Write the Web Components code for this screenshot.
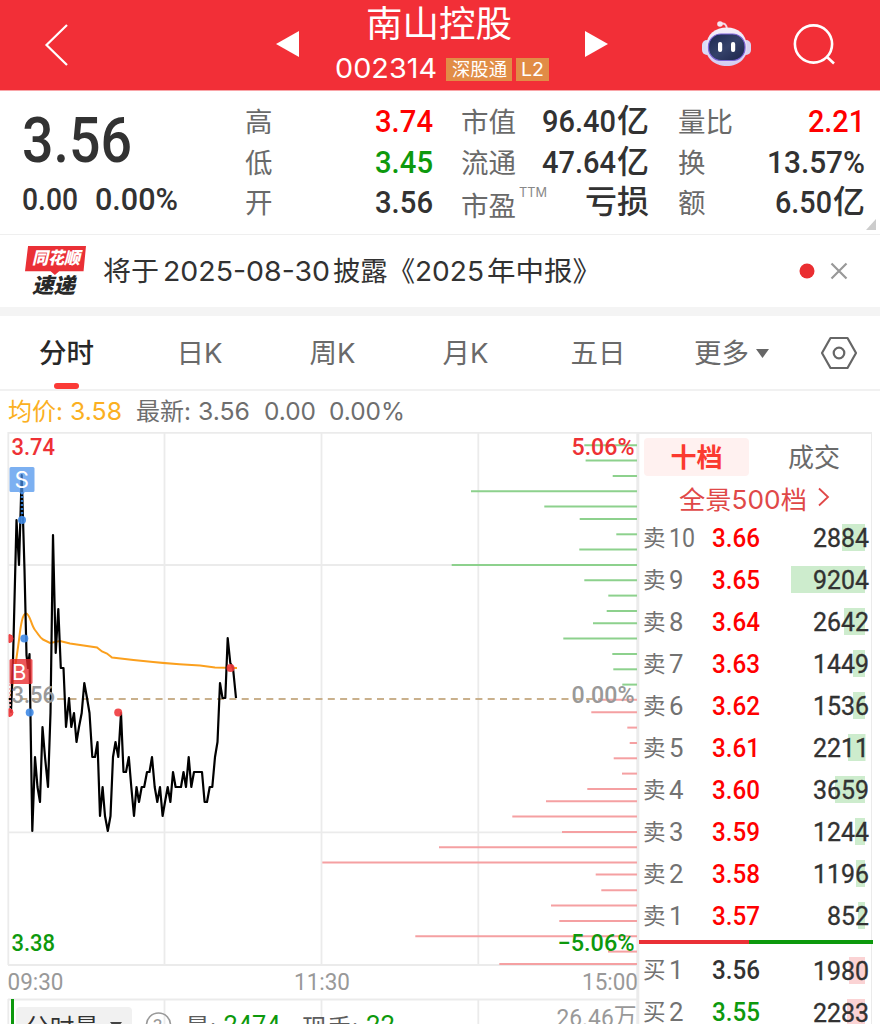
<!DOCTYPE html>
<html lang="zh-CN">
<head>
<meta charset="utf-8">
<title>南山控股 002314</title>
<style>
  html, body { margin: 0; padding: 0; }
  body {
    width: 880px;
    height: 1024px;
    overflow: hidden;
    background: #fff;
    color: #323232;
    font-family: Inter, "Noto Sans CJK SC", sans-serif;
  }
</style>
</head>
<body>
<stock-page></stock-page>

<script>
(function () {
  const NUM = 'Roboto, "Noto Sans CJK SC", sans-serif';

  // 基类：把 html 写入 shadow root
  class Base extends HTMLElement {
    connectedCallback() {
      if (this.shadowRoot) return;
      this.attachShadow({ mode: "open" });
      this.shadowRoot.innerHTML = this.template();
    }
    attr(name, def) {
      return this.getAttribute(name) || def || "";
    }
  }

  /** 顶部标题栏 */
  class StockHeader extends Base {
    template() {
      return `
        <style>
          :host {
            display: grid;
            grid-template-columns: 268px 348px 1fr;
            height: 90px;
            background: #f22f37;
            border-bottom: 1px solid #f9a5a8;
            color: #fff;
          }
          svg { display: block; }
          .back { padding: 22px 0 0 43px; }
          .mid { display: flex; justify-content: space-between; }
          .mid > svg { margin-top: 30px; }
          .info { display: flex; flex-direction: column; align-items: center; }
          .name { font-size: 36px; line-height: 36px; margin: 6px 6px 0 0; white-space: nowrap; }
          .code { display: flex; align-items: center; margin-top: 13px; height: 28px; font-size: 27px; line-height: 28px; }
          .tag {
            display: flex;
            justify-content: center;
            box-sizing: border-box;
            height: 23px;
            margin-left: 4px;
            background: #e18c46;
            font-size: 18px;
            line-height: 23px;
          }
          .right { display: flex; padding: 18px 0 0 84px; gap: 38px; }
        </style>
        <div class="back">
          <svg width="28" height="46" fill="none" stroke="#fff" stroke-width="2.2"><path d="M24 3L3.5 23L24 43"/></svg>
        </div>
        <div class="mid">
          <svg width="32" height="28" fill="#fff"><path d="M8 14L31 1V27Z"/></svg>
          <div class="info">
            <div class="name"><fit-text w="146">南山控股</fit-text></div>
            <div class="code">
              <fit-text w="102">002314</fit-text>
              <span class="tag" style="width:66px;margin-left:9px"><fit-text w="55">深股通</fit-text></span>
              <span class="tag" style="width:33px"><fit-text w="23">L2</fit-text></span>
            </div>
          </div>
          <svg width="32" height="28" fill="#fff"><path d="M1 1L24 14L1 27Z"/></svg>
        </div>
        <div class="right">
          <svg width="54" height="52" viewBox="0 0 54 52">
            <defs>
              <linearGradient id="shell" x1="0" y1="0" x2="0" y2="1">
                <stop offset="0" stop-color="#f6f1fa"/><stop offset="1" stop-color="#d3cbf2"/>
              </linearGradient>
              <linearGradient id="face" x1="0" y1="0" x2="1" y2="1">
                <stop offset="0" stop-color="#1c2850"/><stop offset=".5" stop-color="#35426a"/><stop offset="1" stop-color="#1b2349"/>
              </linearGradient>
            </defs>
            <path d="M20 6Q27 4 27 12" fill="none" stroke="#f3d5e4" stroke-width="2"/>
            <circle cx="20" cy="6" r="2.8" fill="#f5e6f2"/>
            <rect x="2" y="22" width="10" height="15" rx="5" fill="#d9dcf7"/>
            <rect x="41" y="22" width="10" height="15" rx="5" fill="#d9d4f2"/>
            <path d="M27 9.500C38 9.500 46 16 47 28C48 40 39 48 27 48C14 48 5 40 6 28C7 16 15 9.500 27 9.500Z" fill="url(#shell)"/>
            <rect x="8.500" y="16" width="36.500" height="26.500" rx="12.500" fill="url(#face)" stroke="#7c62d6" stroke-width="1.200"/>
            <rect x="18" y="24" width="4.200" height="10" rx="2" fill="#fff"/>
            <rect x="31" y="24" width="4.200" height="10" rx="2" fill="#fff"/>
          </svg>
          <svg width="46" height="52" fill="none" stroke="#fff" stroke-width="2.600">
            <circle cx="21.500" cy="26" r="18.600"/><path d="M34.500 38.500L42 45.500"/>
          </svg>
        </div>`;
    }
  }

  /** 单个指标：左标签，右数值 */
  class StatCell extends Base {
    template() {
      const unit = this.attr("unit");
      return `
        <style>
          :host { display: flex; justify-content: space-between; align-items: center; height: 40.5px; white-space: nowrap; }
          .label { font-size: 27.5px; line-height: 42px; color: #6a6a6a; display: flex; }
          .value { display: flex; align-items: center; font: 500 32px/40px ${NUM}; color: ${this.attr("color", "#323232")}; }
          .value fit-text { line-height: 38px; margin-bottom: 2px; }
          .unit { font-size: 32px; margin: 0 0 2px 1px; }
          sup { font: 13px/14px Inter; color: #888; margin: 0 0 0 3px; }
          :host([sup]) .label { padding-top: 6px; }
        </style>
        <span class="label">${this.attr("label")}${this.hasAttribute("sup") ? `<sup><fit-text w="28">${this.attr("sup")}</fit-text></sup>` : ""}</span>
        <span class="value">
          ${this.hasAttribute("value") ? `<fit-text w="${this.attr("w")}">${this.attr("value")}</fit-text>` : ""}
          ${unit ? `<span class="unit">${unit}</span>` : ""}
        </span>`;
    }
  }

  /** 行情概要 */
  class QuotePanel extends Base {
    template() {
      return `
        <style>
          :host {
            display: grid;
            grid-template-columns: 223px 188px 188px 220px;
            height: 144px;
            box-sizing: border-box;
            padding-left: 22px;
            border-bottom: 1.5px solid #efefef;
          }
          .price { font: 500 63px/64px ${NUM}; margin-top: 18px; }
          .change { display: flex; gap: 17px; font: 500 32px/36px ${NUM}; margin-top: 8px; }
          .col { padding-top: 11px; }
          .c2, .c3 { margin-left: 28px; width: 188px; }
          .c3 { margin-left: 57px; width: 187px; }
          .c2 { padding-left: 0; }
          .corner {
            position: absolute;
            left: 866px;
            top: 219px;
            width: 10px;
            height: 11px;
            background: #ccc;
            clip-path: polygon(100% 0, 100% 100%, 0 100%);
          }
        </style>
        <div>
          <div class="price"><fit-text w="110">3.56</fit-text></div>
          <div class="change"><fit-text w="56">0.00</fit-text><fit-text w="83">0.00%</fit-text></div>
        </div>
        <div class="col">
          <stat-cell label="高" value="3.74" w="58" color="#f00"></stat-cell>
          <stat-cell label="低" value="3.45" w="58" color="#0d990d"></stat-cell>
          <stat-cell label="开" value="3.56" w="58"></stat-cell>
        </div>
        <div class="col c2">
          <stat-cell label="市值" value="96.40" w="74" unit="亿"></stat-cell>
          <stat-cell label="流通" value="47.64" w="74" unit="亿"></stat-cell>
          <stat-cell label="市盈" sup="TTM" unit="亏损"></stat-cell>
        </div>
        <div class="col c3">
          <stat-cell label="量比" value="2.21" w="57" color="#f00"></stat-cell>
          <stat-cell label="换" value="13.57%" w="98"></stat-cell>
          <stat-cell label="额" value="6.50" w="57" unit="亿"></stat-cell>
        </div>
        <i class="corner"></i>`;
    }
  }

  /** 公告条 */
  class NoticeBar extends Base {
    template() {
      return `
        <style>
          :host { display: flex; align-items: center; height: 72px; border-bottom: 9px solid #f4f4f4; padding-left: 25px; }
          .logo { display: flex; flex-direction: column; align-items: center; width: 61px; height: 50px; font-style: italic; font-weight: 900; }
          .badge {
            display: flex;
            justify-content: center;
            width: 61px;
            height: 29px;
            background: #ea3036;
            clip-path: polygon(5% 0, 100% 0, 96% 87%, 56% 87%, 49% 100%, 42% 87%, 0 87%);
            color: #fff;
            font-size: 17px;
            line-height: 25px;
          }
          .sub { color: #282828; font-size: 21px; line-height: 21px; margin: 0 4px 0 0; }
          .text { display: flex; align-items: center; margin-left: 17px; font-size: 27.5px; line-height: 40px; width: 696px; }
          svg { display: block; }
        </style>
        <div class="logo">
          <div class="badge"><fit-text w="48">同花顺</fit-text></div>
          <div class="sub"><fit-text w="43">速递</fit-text></div>
        </div>
        <div class="text">
          <fit-text w="56">将于</fit-text><fit-text w="167" style="margin-left:4px">2025-08-30</fit-text>
          <fit-text w="82" style="margin-left:3px">披露《</fit-text><fit-text w="69">2025</fit-text>
          <fit-text w="114" style="margin-left:3px">年中报》</fit-text>
        </div>
        <svg width="54" height="20">
          <circle cx="8" cy="10" r="7.500" fill="#ea2e31"/>
          <path d="M32.500 2.500L47.500 17.500M47.500 2.500L32.500 17.500" stroke="#999" stroke-width="2.200"/>
        </svg>`;
    }
  }

  /** 周期切换 */
  class PeriodTabs extends Base {
    template() {
      return `
        <style>
          :host {
            display: grid;
            grid-template-columns: 133px 133px 133px 133px 132px 216px;
            height: 73px;
            border-bottom: 2px solid #f1f1f1;
            font-size: 27.5px;
            color: #6a6a6a;
          }
          div { display: flex; flex-direction: column; align-items: center; line-height: 40px; padding-top: 17px; white-space: nowrap; }
          .on { font-weight: 500; color: #282828; }
          .on::after { content: ""; width: 25px; height: 6px; border-radius: 3px; background: #fb3a36; margin-top: 10px; }
          .more { flex-direction: row; align-items: flex-start; padding-left: 30px; }
          .tri { margin: 15px 0 0 7px; }
          .hex { margin: 3px 0 0 51px; }
        </style>
        <div class="on">分时</div>
        <div>日K</div>
        <div>周K</div>
        <div>月K</div>
        <div>五日</div>
        <div class="more">更多
          <svg class="tri" width="13" height="11"><path d="M0 1H13L6.500 10Z" fill="#666"/></svg>
          <svg class="hex" width="38" height="34" fill="none" stroke="#666" stroke-width="2.200">
            <path d="M10.500 2H27.500L36 17L27.500 32H10.500L2 17Z" stroke-linejoin="round"/>
            <circle cx="19" cy="17" r="5.300"/>
          </svg>
        </div>`;
    }
  }

  /** 均价 / 最新 */
  class PriceLine extends Base {
    template() {
      return `
        <style>
          :host { display: flex; height: 41px; font-size: 24px; line-height: 41px; color: #6e6e6e; padding-left: 8px; white-space: nowrap; }
          .avg { display: flex; color: #fbb022; margin-right: 12px; }
          fit-text { margin-right: 7px; }
        </style>
        <span class="avg"><fit-text w="55">均价:</fit-text><fit-text w="52" style="margin-right:2px">3.58</fit-text></span>
        <fit-text w="55">最新:</fit-text>
        <fit-text w="52" style="margin-right:14px">3.56</fit-text>
        <fit-text w="52" style="margin-right:13px">0.00</fit-text>
        <fit-text w="76">0.00%</fit-text>`;
    }
  }

  // 分时价格点
  const PRICE = "10,698 11,712 13,660 16.5,520 19,565 21.7,475 24.500,570 26.500,655 28,668 29.500,654 32.300,831 35,757 37.500,787 40,802 42.500,727 45,757 48,787 50.500,713 53,535 55.700,653 58.300,609 60.800,668 63.500,668 66,727 69,698 71.300,727 74,713 76.500,742 79,727 81.700,713 84.300,683 87,698 89.500,713 92.300,757 95,757 97.500,742 100,816 102.600,787 105,816 107.800,831 110.500,816 113,757 115.500,742 118.300,757 121,713 123.500,772 126,772 128.800,757 131.300,787 134,816 136.500,787 139,802 141.700,787 144.200,787 147,772 149.500,772 152,757 154.700,787 157.300,802 160,787 162.600,816 165,802 167.700,787 170.400,802 173,772 175.600,787 181,787 183.500,772 186,787 188.700,757 191.300,787 194,772 202,772 204.600,802 207,802 209.700,787 212.300,787 215,757 217.500,742 220,683 222.500,698 225.300,698 227.700,638 230.300,663 233,668 236,698";
  const AVG = "M10 700C14 675 17 655 19 640C21 622 23 613.500 26 613.500C30 613.500 31 625 35 630C39 635 40 638 43 639.500L50 643L60 641L70 643.500L97 647.500L102 651.500L107 653.500L112 657.500C140 661 170 664 200 665.500L215 667.500L237 668";

  // 委托分布 [y, 起点x]
  const SELL = [[445.3,584.3],[460.6,585.6],[476,612.7],[491.3,471],[506.6,544.3],[519,579.7],[534.3,616.3],[549.6,579.3],[565,451.7],[580.3,584.3],[595.6,608.3],[611,606.7],[623.3,593],[638.6,563.3],[654,612.3],[669.3,613.3],[684.6,622.3]];
  const BUY = [[699.7,598],[712.3,591.3],[727.6,627.3],[743,629.7],[758.3,613.7],[773.6,622],[789,587.3],[801.3,546],[816.6,512.3],[832,562],[847.3,439],[862.6,322.3],[874.6,595.7],[890.3,601.3],[905.6,551],[921,559.3],[936.3,415.3],[951.6,608],[964,499.3]];

  /** 分时图 */
  class TrendChart extends Base {
    bars(list, color) {
      return list.map(([y, x]) => `<path d="M${x} ${y}H637" stroke="${color}"/>`).join("");
    }
    template() {
      // viewBox 从 432 开始，坐标与整页一致
      return `
        <style>
          :host { display: block; width: 639px; height: 592px; font-family: ${NUM}; }
          svg { display: block; overflow: visible; }
          .grid { stroke: #ebebeb; stroke-width: 1.8; fill: none; }
          .lbl { font-size: 24px; font-weight: 500; }
          .axis { font-size: 24.5px; fill: #999; }
          .vol { font-size: 25px; fill: #5c5c5c; }
        </style>
        <svg width="639" height="592" viewBox="0 432 639 592">
          <g class="grid">
            <path d="M8 432.800H639M8 565H637M8 832.300H637M8 965H637"/>
            <path d="M8.300 432V965M164.500 432V965M321.500 432V965M478.300 432V965"/>
            <path d="M8 999.500H638M8.300 999V1025M164.500 999V1025M321.500 999V1025M478.300 999V1025"/>
            <path d="M637.800 432V1025" stroke-width="3"/>
          </g>
          <g stroke-width="2">${this.bars(SELL, "#8dd18d")}${this.bars(BUY, "#f5a0a2")}</g>
          <path d="M8 699H600" stroke="#c9b08c" stroke-width="1.800" stroke-dasharray="7 5.300"/>
          <path d="${AVG}" fill="none" stroke="#fba01e" stroke-width="2"/>
          <polyline points="${PRICE}" fill="none" stroke="#000" stroke-width="2.200" stroke-linejoin="round"/>
          <path d="M22 492V520" stroke="#2f76c8" stroke-width="2.400" stroke-dasharray="2 2"/>
          <path d="M10 684V712" stroke="#f6b0b0" stroke-width="2" stroke-dasharray="2 2"/>
          <g fill="#3f8ae6" fill-opacity=".9">
            <circle cx="22" cy="520" r="4"/><circle cx="24.300" cy="638.600" r="4"/><circle cx="29.700" cy="712.600" r="4"/>
          </g>
          <g fill="#ef3a3d" fill-opacity=".9">
            <path d="M9 634.600A4 4 0 0 1 9 642.600ZM9 708.600A4 4 0 0 1 9 716.600Z" stroke="#ef3a3d"/>
            <circle cx="118.200" cy="712.600" r="4"/><circle cx="230.500" cy="668" r="4"/>
          </g>
          <path d="M11 467H33Q34.500 467 34.500 468.500V490.500Q34.500 492 33 492H25L22 495L19 492H11Q9.500 492 9.500 490.500V468.500Q9.500 467 11 467Z" fill="#4a92ec" fill-opacity=".72"/>
          <rect x="9.500" y="659" width="23" height="25" rx="1.500" fill="#e8282b" fill-opacity=".78"/>
          <text x="14.500" y="488" font-size="22.500" font-family="Inter" fill="#fff">S</text>
          <text x="12" y="680" font-size="22" font-family="Inter" fill="#fff">B</text>
          <g class="lbl">
            <text x="11.500" y="455.300" textLength="43.500" lengthAdjust="spacingAndGlyphs" fill="#ee3135">3.74</text>
            <text x="571.500" y="455.300" textLength="63" lengthAdjust="spacingAndGlyphs" fill="#ee3135">5.06%</text>
            <text x="11.500" y="703" textLength="43.500" lengthAdjust="spacingAndGlyphs" fill="#999">3.56</text>
            <text x="571.500" y="703" textLength="63" lengthAdjust="spacingAndGlyphs" fill="#999">0.00%</text>
            <text x="11.500" y="951" textLength="43.500" lengthAdjust="spacingAndGlyphs" fill="#0d990d">3.38</text>
            <text x="557.500" y="951" textLength="77" lengthAdjust="spacingAndGlyphs" fill="#0d990d">−5.06%</text>
          </g>
          <g class="axis">
            <text x="7.500" y="990" textLength="56" lengthAdjust="spacingAndGlyphs">09:30</text>
            <text x="294" y="990" textLength="56" lengthAdjust="spacingAndGlyphs">11:30</text>
            <text x="582" y="990" textLength="56" lengthAdjust="spacingAndGlyphs">15:00</text>
            <text x="556.500" y="1026" textLength="80" lengthAdjust="spacingAndGlyphs">26.46万</text>
          </g>
          <path d="M12.500 999V1025" stroke="#0d990d" stroke-width="3"/>
          <rect x="16" y="1007" width="116" height="24" rx="4" fill="#f1f1f1"/>
          <path d="M110 1022H122L116 1030Z" fill="#444"/>
          <g fill="none" stroke="#999" stroke-width="1.600"><circle cx="158.500" cy="1025" r="12"/></g>
          <g class="vol">
            <text x="25" y="1036.500" textLength="74" lengthAdjust="spacingAndGlyphs" fill="#323232">分时量</text>
            <text x="153" y="1032" font-size="19" fill="#999">?</text>
            <text x="185" y="1036.500">量:</text>
            <text x="302" y="1036.500" textLength="56" lengthAdjust="spacingAndGlyphs">现手:</text>
            <text x="223.500" y="1034" textLength="57" lengthAdjust="spacingAndGlyphs" fill="#0d990d">2474</text>
            <text x="366" y="1034" textLength="29" lengthAdjust="spacingAndGlyphs" fill="#0d990d">22</text>
          </g>
        </svg>`;
    }
  }

  /** 盘口单行 */
  class OrderRow extends Base {
    template() {
      const buy = this.attr("side") === "买";
      const vol = this.attr("vol");
      const level = this.attr("level");
      return `
        <style>
          :host { display: grid; grid-template-columns: 25.5px 43px 60px 1fr; align-items: center; height: 42px; padding: 0 2px 0 4px; font: 400 26px/42px ${NUM}; color: #727272; }
          .side { font-size: 22.5px; }
          .price { font-weight: 500; color: ${this.attr("color", "#f00")}; }
          .vol {
            justify-self: end;
            width: 94px;
            height: 27px;
            line-height: 28px;
            display: flex;
            justify-content: flex-end;
            color: #323232;
            -webkit-text-stroke: .35px;
            background: linear-gradient(${buy ? "#fbd3d4,#fbd3d4" : "#cdeccd,#cdeccd"}) no-repeat right 4px top / ${this.attr("bar")}px 100%;
          }
        </style>
        <span class="side">${this.attr("side")}</span>
        <fit-text w="${level.length > 1 ? 26 : 14.5}">${level}</fit-text>
        <fit-text class="price" w="48">${this.attr("price")}</fit-text>
        <span class="vol"><fit-text w="${vol.length * 14}">${vol}</fit-text></span>`;
    }
  }

  /** 十档盘口 */
  class OrderBook extends Base {
    template() {
      const sell = [["10", "3.66", "2884", 23], ["9", "3.65", "9204", 74], ["8", "3.64", "2642", 21], ["7", "3.63", "1449", 12], ["6", "3.62", "1536", 12], ["5", "3.61", "2211", 17.5], ["4", "3.60", "3659", 30], ["3", "3.59", "1244", 10], ["2", "3.58", "1196", 9], ["1", "3.57", "852", 7]];
      const buy = [["1", "3.56", "1980", 16, "#323232"], ["2", "3.55", "2283", 18, "#0d990d"]];
      const row = side => ([n, p, v, b, c]) =>
        `<order-row side="${side}" level="${n}" price="${p}" vol="${v}" bar="${b}" ${c ? `color="${c}"` : ""}></order-row>`;
      return `
        <style>
          :host { display: block; width: 233px; height: 592px; box-sizing: border-box; border-top: 2px solid #ebebeb; border-right: 1.5px solid #ebebeb; }
          .tabs { display: flex; padding: 4px 0 0 5px; font-size: 26px; line-height: 39px; color: #6a6a6a; }
          .tabs span { flex: none; width: 105px; height: 38px; text-align: center; }
          .tabs .on { background: #fff1f0; border-radius: 4px; color: #fb3a30; font-weight: 700; }
          .tabs span + span { width: 120px; margin-left: 5px; }
          .all { display: flex; align-items: center; padding-left: 39.5px; height: 40.5px; padding-top: 2px; box-sizing: border-box; font-size: 25.5px; color: #e04848; }
          .split { height: 4px; margin: 3.500px -2px 5px 0; background: linear-gradient(90deg, #ea3036 110px, #0d990d 110px); }
        </style>
        <div class="tabs"><span class="on">十档</span><span>成交</span></div>
        <div class="all">
          <fit-text w="128">全景500档</fit-text>
          <svg width="14" height="20" style="margin-left:11px" fill="none" stroke="#e04848" stroke-width="1.800"><path d="M1 1.500L10 10L1 18.500"/></svg>
        </div>
        ${sell.map(row("卖")).join("")}
        <div class="split"></div>
        ${buy.map(row("买")).join("")}`;
    }
  }

  class StockPage extends Base {
    template() {
      return `
        <style>
          :host { display: block; width: 880px; height: 1024px; overflow: hidden; }
          .main { display: flex; }
        </style>
        <stock-header></stock-header>
        <quote-panel></quote-panel>
        <notice-bar></notice-bar>
        <period-tabs></period-tabs>
        <price-line></price-line>
        <div class="main"><trend-chart></trend-chart><order-book></order-book></div>`;
    }
  }

  /** 把文字横向缩放到指定宽度 */
  class FitText extends HTMLElement {
    connectedCallback() {
      if (this.shadowRoot) return;
      const w = parseFloat(this.getAttribute("w"));
      this.attachShadow({ mode: "open" });
      this.shadowRoot.innerHTML = `
        <style>
          :host { display: block; flex: none; width: ${w}px; white-space: nowrap; }
          span { display: inline-block; vertical-align: top; transform-origin: 0 50%; }
        </style>
        <span><slot></slot></span>`;
      const span = this.shadowRoot.querySelector("span");
      const real = span.getBoundingClientRect().width;
      if (real) span.style.transform = `scaleX(${w / real})`;
    }
  }

  customElements.define("stock-page", StockPage);
  customElements.define("stock-header", StockHeader);
  customElements.define("quote-panel", QuotePanel);
  customElements.define("stat-cell", StatCell);
  customElements.define("notice-bar", NoticeBar);
  customElements.define("period-tabs", PeriodTabs);
  customElements.define("price-line", PriceLine);
  customElements.define("trend-chart", TrendChart);
  customElements.define("order-book", OrderBook);
  customElements.define("order-row", OrderRow);
  customElements.define("fit-text", FitText);
})();
</script>
</body>
</html>
